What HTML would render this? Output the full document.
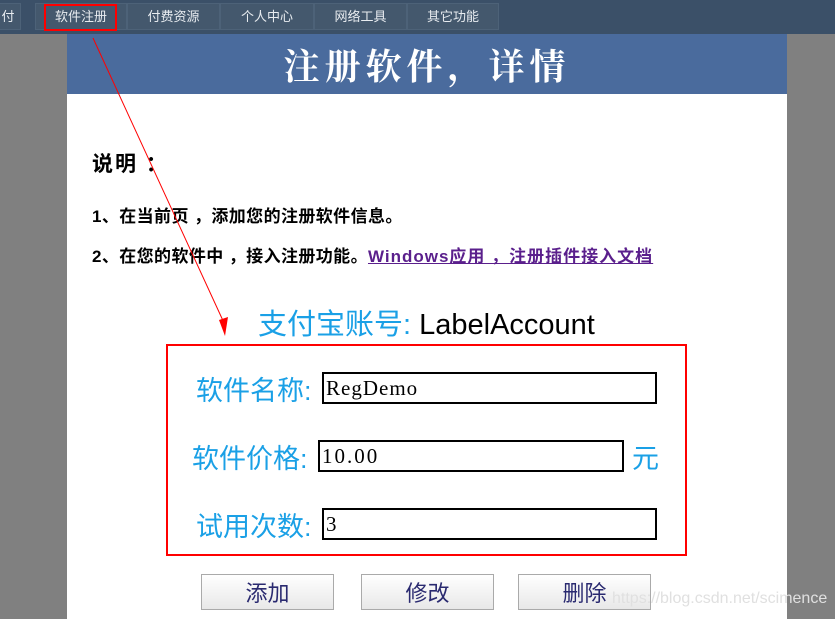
<!DOCTYPE html>
<html><head><meta charset="utf-8"><style>
*{margin:0;padding:0;box-sizing:border-box}
body{width:835px;height:619px;overflow:hidden;background:#808080;position:relative;font-family:"Liberation Sans","Noto Sans CJK SC",sans-serif}
.nav{position:absolute;left:0;top:0;width:835px;height:34px;background:#3b5068}
.nav div{position:absolute;top:3px;height:27px;border:1px solid #4d6278;background:#44586d;color:#e8ecf0;font-size:13px;line-height:25px;text-align:center}
.page{position:absolute;left:67px;top:34px;width:720px;height:585px;background:#fff}
.hdr{height:60px;background:#4a6b9d;color:#fff;text-align:center;font-family:"Noto Serif CJK SC",serif;font-size:36px;font-weight:bold;line-height:62px;letter-spacing:5px}
.abs{position:absolute;white-space:nowrap}
.blue{color:#1aa0e6}
.lbl{font-size:27px}
.inp{position:absolute;height:32px;border:2px solid #000;font-family:"Liberation Serif","Noto Serif CJK SC",serif;font-size:21px;line-height:28px;padding-left:2px;color:#000;letter-spacing:1px}
.btn{position:absolute;top:574px;width:133px;height:36px;border:1px solid #aaa;background:linear-gradient(#fff,#e8e8e8);color:#2a2a70;font-size:22px;text-align:center;line-height:38px}
</style></head><body>
<div class="nav">
<div style="left:-5px;width:26px">付</div>
<div style="left:35px;width:92px">软件注册</div>
<div style="left:127px;width:93px">付费资源</div>
<div style="left:220px;width:94px">个人中心</div>
<div style="left:314px;width:93px">网络工具</div>
<div style="left:407px;width:92px">其它功能</div>
</div>
<div class="abs" style="left:44px;top:4px;width:73px;height:27px;border:2px solid #f00"></div>
<div class="page"><div class="hdr">注册软件，详情</div></div>
<div class="abs" style="left:92px;top:148px;font-size:21px;font-weight:bold;letter-spacing:2px">说明 ：</div>
<div class="abs" style="left:92px;top:202px;font-size:17px;font-weight:bold;letter-spacing:0.4px">1、在当前页 ，添加您的注册软件信息。</div>
<div class="abs" style="left:92px;top:242px;font-size:17px;font-weight:bold;letter-spacing:0.4px">2、在您的软件中 ，接入注册功能。<span style="color:#5a1f8c;text-decoration:underline;letter-spacing:1px">Windows应用 ，注册插件接入文档</span></div>
<div class="abs" style="left:258px;top:301px;font-size:29px"><span class="blue">支付宝账号:</span> LabelAccount</div>
<div class="abs" style="left:166px;top:344px;width:521px;height:212px;border:2px solid #f00"></div>
<div class="abs blue lbl" style="left:196px;top:369px">软件名称:</div>
<div class="inp" style="left:322px;top:372px;width:335px">RegDemo</div>
<div class="abs blue lbl" style="left:192px;top:437px">软件价格:</div>
<div class="inp" style="left:318px;top:440px;width:306px;letter-spacing:2px">10.00</div>
<div class="abs blue lbl" style="left:632px;top:437px">元</div>
<div class="abs blue lbl" style="left:196px;top:505px">试用次数:</div>
<div class="inp" style="left:322px;top:508px;width:335px">3</div>
<div class="btn" style="left:201px">添加</div>
<div class="btn" style="left:361px">修改</div>
<div class="btn" style="left:518px">删除</div>
<div class="abs" style="left:612px;top:590px;font-size:16px;color:#e0e0e0">https://blog.csdn.net/scimence</div>
<svg class="abs" style="left:0;top:0" width="835" height="619"><line x1="93" y1="38" x2="225" y2="325" stroke="#f00" stroke-width="1"/><polygon points="225,336 219,320 228,317" fill="#f00"/></svg>
</body></html>
